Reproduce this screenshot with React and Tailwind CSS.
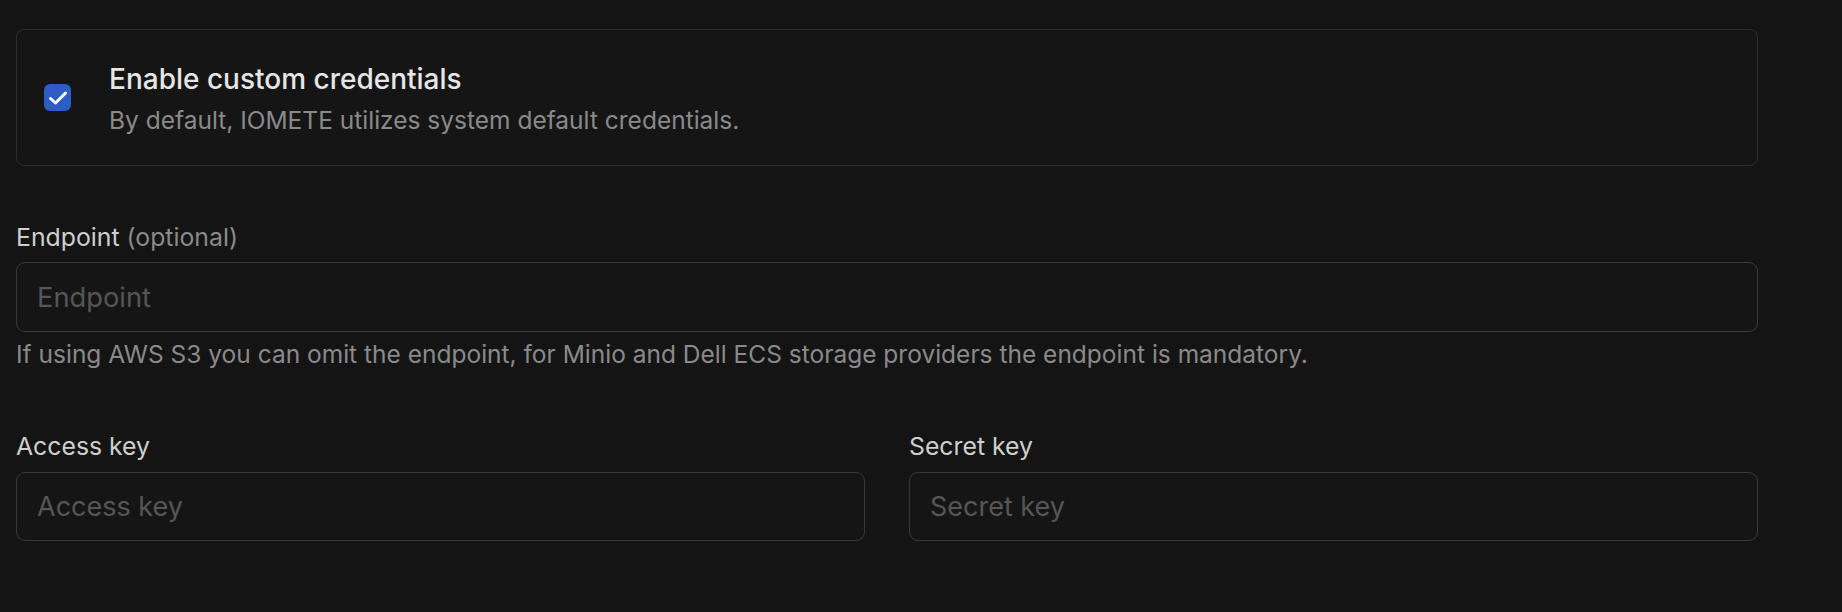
export default function App() {
  const font = { fontFamily: 'Inter, "Noto Sans", sans-serif' };
  return (
    <div className="min-h-[612px] w-full bg-[#141414] pl-4 pt-[29px]" style={font}>
      <div className="w-[1742px]">
        <div className="flex h-[137px] items-center rounded-lg border border-[#2d2d2d] bg-[#151515] pl-[27px]">
          <div className="flex h-[27px] w-[27px] items-center justify-center rounded-[6px] bg-[#2d5cc6]">
            <svg width="20" height="20" viewBox="0 0 20 20" fill="none" stroke="white" strokeWidth="3" strokeLinecap="round" strokeLinejoin="round">
              <path d="M2.5 10.5l5 4.5L17.5 5" />
            </svg>
          </div>
          <div className="ml-[38px] mt-[2px] flex flex-col">
            <div className="text-[28px] font-medium leading-[34px] text-[#e6e6e6]">Enable custom credentials</div>
            <div className="mt-[8px] text-[24.5px] leading-[32px] text-[#8a8a8a]">By default, IOMETE utilizes system default credentials.</div>
          </div>
        </div>

        <div className="mt-[55px] flex flex-col">
          <div className="text-[24.8px] leading-[32px] text-[#cfcfcf]">
            Endpoint <span className="text-[#8a8a8a]">(optional)</span>
          </div>
          <input
            className="mt-[9px] h-[70px] w-full rounded-[9px] border border-[#393939] bg-[#151515] px-[20px] text-[27.3px] text-[#e6e6e6] outline-none placeholder:text-[#565656]"
            placeholder="Endpoint"
            style={font}
          />
          <div className="mt-[6px] text-[24.5px] leading-[32px] text-[#8a8a8a]">
            If using AWS S3 you can omit the endpoint, for Minio and Dell ECS storage providers the endpoint is mandatory.
          </div>
        </div>

        <div className="mt-[60px] grid grid-cols-2 gap-[44px]">
          <div className="flex flex-col">
            <div className="text-[24.8px] leading-[32px] text-[#cfcfcf]">Access key</div>
            <input
              className="mt-[10px] h-[69px] w-full rounded-[9px] border border-[#393939] bg-[#151515] px-[20px] text-[27px] text-[#e6e6e6] outline-none placeholder:text-[#565656]"
              placeholder="Access key"
              style={font}
            />
          </div>
          <div className="flex flex-col">
            <div className="text-[24.8px] leading-[32px] text-[#cfcfcf]">Secret key</div>
            <input
              className="mt-[10px] h-[69px] w-full rounded-[9px] border border-[#393939] bg-[#151515] px-[20px] text-[27px] text-[#e6e6e6] outline-none placeholder:text-[#565656]"
              placeholder="Secret key"
              style={font}
            />
          </div>
        </div>
      </div>
    </div>
  );
}
